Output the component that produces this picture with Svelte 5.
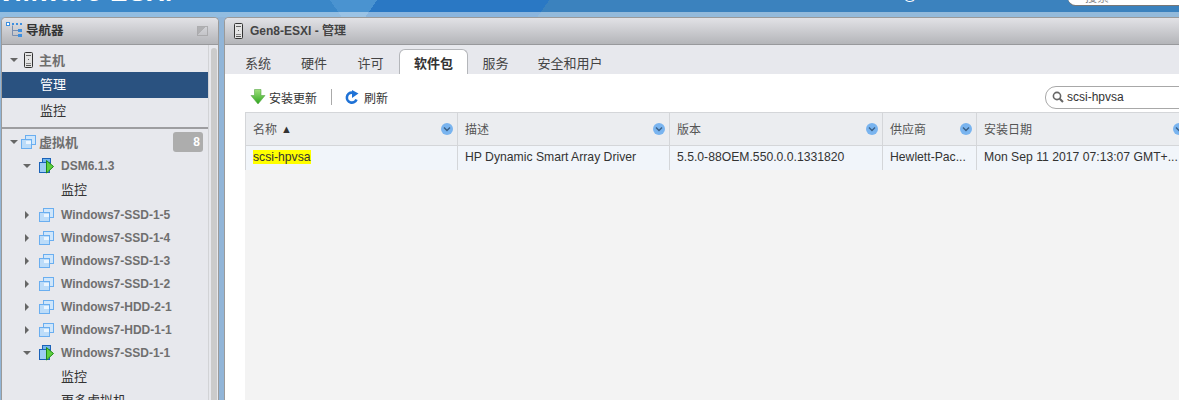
<script lang="ts">
	const vms = ['Windows7-SSD-1-5', 'Windows7-SSD-1-4', 'Windows7-SSD-1-3', 'Windows7-SSD-1-2', 'Windows7-HDD-2-1', 'Windows7-HDD-1-1'];
	const tabs = [
		{ label: '系统', w: 56 },
		{ label: '硬件', w: 56 },
		{ label: '许可', w: 57 },
		{ label: '软件包', w: 69, active: true },
		{ label: '服务', w: 55 },
		{ label: '安全和用户', w: 94 }
	];
	const columns = [
		{ label: '名称', sorted: true },
		{ label: '描述' },
		{ label: '版本' },
		{ label: '供应商' },
		{ label: '安装日期' }
	];
	const row = ['HP Dynamic Smart Array Driver', '5.5.0-88OEM.550.0.0.1331820', 'Hewlett-Pac...', 'Mon Sep 11 2017 07:13:07 GMT+...'];
</script>

{#snippet server()}
	<svg class="server" width="9" height="16" viewBox="0 0 9 16">
		<rect x="0.5" y="0.5" width="8" height="15" rx="1" fill="#e4e4e4" stroke="#333" />
		<rect x="2" y="3" width="5" height="1" fill="#666" />
		<rect x="4" y="7" width="1" height="1" fill="#666" />
		<rect x="2" y="11" width="5" height="1" fill="#888" />
		<rect x="2" y="13" width="5" height="1" fill="#555" />
	</svg>
{/snippet}

{#snippet vmIcon()}
	<svg width="15" height="14" viewBox="0 0 15 14">
		<rect x="4.5" y="0.5" width="10" height="9" fill="#cfe6fb" stroke="#6aaef0" />
		<rect x="0.5" y="4.5" width="10" height="9" fill="#bcdcf9" stroke="#6aaef0" />
		<rect x="5" y="6" width="5" height="3" fill="#eaf5ff" />
	</svg>
{/snippet}

{#snippet vmOn()}
	<svg width="15" height="16" viewBox="0 0 15 16">
		<rect x="3.5" y="0.5" width="8" height="8" fill="#6fb4ee" stroke="#1b62b8" />
		<rect x="0.5" y="4.5" width="10" height="10" fill="#9ccdf3" stroke="#1b62b8" />
		<path d="M7.5 2.5 L14.5 8.5 L7.5 15 Z" fill="#5fd13f" stroke="#1f8a14" />
	</svg>
{/snippet}

{#snippet caret(open: boolean)}
	<svg class="caret" width="8" height="8" viewBox="0 0 8 8">
		{#if open}
			<path d="M0 2 H8 L4 6 Z" fill="#666" />
		{:else}
			<path d="M2 0 L6 4 L2 8 Z" fill="#666" />
		{/if}
	</svg>
{/snippet}

{#snippet chevron()}
	<svg class="chev" width="12" height="12" viewBox="0 0 12 12">
		<circle cx="6" cy="6" r="6" fill="#79b4ef" />
		<path d="M3 4.5 L6 7.5 L9 4.5" fill="none" stroke="#3a5f86" stroke-width="1.4" />
	</svg>
{/snippet}

<div class="page">
	<header class="topbar">
		<div class="brand">vmware ESXi</div>
		<div class="user">root@192.168.1.8</div>
		<div class="help">帮助</div>
		<div class="topsearch">搜索</div>
	</header>

	<main class="main">
		<aside class="panel nav">
			<div class="title">
				<svg width="17" height="17" viewBox="0 0 17 17">
					<rect x="0.5" y="0.5" width="3" height="3" fill="#fff" stroke="#3d8fe0" />
					<rect x="6" y="1" width="2" height="2" fill="#3d8fe0" />
					<rect x="10" y="1" width="2" height="2" fill="#3d8fe0" />
					<rect x="14" y="1" width="2" height="2" fill="#3d8fe0" />
					<path d="M6.5 3.5 V13.5 H12 M6.5 8.5 H12" fill="none" stroke="#7a8fb0" />
					<rect x="12" y="7" width="4" height="3" fill="#3d8fe0" />
					<rect x="12" y="12" width="4" height="3" fill="#3d8fe0" />
				</svg>
				<span class="title-text">导航器</span>
				<span class="restore"></span>
			</div>
			<div class="nav-body">
				<div class="tree">
					<div class="host">
						<div class="item head">{@render caret(true)}{@render server()}<span>主机</span></div>
						<div class="item sub selected">管理</div>
						<div class="item sub">监控</div>
					</div>
					<div class="item head vmhead">
						{@render caret(true)}{@render vmIcon()}<span>虚拟机</span><span class="badge">8</span>
					</div>
					<div class="item vm">{@render caret(true)}{@render vmOn()}<span>DSM6.1.3</span></div>
					<div class="item leaf tall">监控</div>
					{#each vms as name}
						<div class="item vm">{@render caret(false)}{@render vmIcon()}<span>{name}</span></div>
					{/each}
					<div class="item vm">{@render caret(true)}{@render vmOn()}<span>Windows7-SSD-1-1</span></div>
					<div class="item leaf">监控</div>
					<div class="item leaf">更多虚拟机</div>
				</div>
				<div class="scroll"><div class="thumb"></div></div>
			</div>
		</aside>

		<section class="panel content">
			<div class="title">
				{@render server()}
				<span class="crumb">Gen8-ESXI - 管理</span>
			</div>
			<nav class="tabs">
				{#each tabs as t}
					<div class="tab" class:active={t.active} style="width: {t.w}px">{t.label}</div>
				{/each}
			</nav>
			<div class="body">
				<div class="toolbar">
					<svg width="16" height="16" viewBox="0 0 16 16">
						<defs>
							<linearGradient id="arrow" x1="0" y1="0" x2="0" y2="1">
								<stop offset="0" stop-color="#9ee07a" />
								<stop offset="1" stop-color="#2ea51e" />
							</linearGradient>
						</defs>
						<path d="M4.5 0.5 H11 V6.5 H15 L8 15 L1 6.5 H4.5 Z" fill="url(#arrow)" stroke="#5aa84a" stroke-width="0.6" />
					</svg>
					<span class="tool-label first">安装更新</span>
					<span class="sep"></span>
					<svg width="15" height="15" viewBox="0 0 15 15">
						<path d="M11.5 9.5 A5 5 0 1 1 7 2.6" fill="none" stroke="#1f72d6" stroke-width="2.6" />
						<path d="M7 0 L13.5 3.5 L7 8 Z" fill="#1f72d6" />
					</svg>
					<span class="tool-label">刷新</span>
					<div class="search">
						<svg width="12" height="12" viewBox="0 0 12 12">
							<circle cx="5" cy="5" r="3.6" fill="none" stroke="#666" stroke-width="1.6" />
							<path d="M7.7 7.7 L11 11" stroke="#666" stroke-width="2" />
						</svg>
						<span>scsi-hpvsa</span>
					</div>
				</div>
				<div class="grid-wrap">
					<div class="grid">
						{#each columns as c}
							<div class="th">
								<span class="th-label">{c.label}</span>
								{#if c.sorted}<span class="sort">▲</span>{/if}
								{@render chevron()}
							</div>
						{/each}
						<div class="td"><mark>scsi-hpvsa</mark></div>
						{#each row as cell}
							<div class="td">{cell}</div>
						{/each}
					</div>
				</div>
			</div>
		</section>
	</main>
</div>

<style>
	:global(body) {
		margin: 0;
		background: #91b5d8;
	}

	.page {
		width: 1179px;
		height: 400px;
		overflow: hidden;
		font-family: 'Liberation Sans', 'Noto Sans CJK SC', sans-serif;
		font-size: 12px;
		color: #333;
		background: #91b5d8;
	}

	.topbar {
		height: 17px;
		overflow: hidden;
		display: flex;
		background:
			linear-gradient(55deg, #3a87c8 280px, transparent 280px),
			linear-gradient(125deg, #4a93d0 309px, #2a78c4 309px, #2a78c4 450px, #3b82be 450px);
		box-shadow: inset 0 -5px 0 rgba(255, 255, 255, 0.45);
	}

	.brand {
		margin: -23px 0 0 -1px;
		width: 880px;
		flex: none;
		font-size: 26px;
		line-height: 30px;
		font-weight: bold;
		letter-spacing: 1px;
		color: #fff;
		height: 30px;
	}

	.user {
		margin-top: -13px;
		width: 126px;
		flex: none;
		height: 16px;
		font-size: 14px;
		line-height: 16px;
		color: #fff;
	}

	.help {
		margin-top: -13px;
		width: 63px;
		flex: none;
		height: 16px;
		font-size: 12px;
		line-height: 16px;
		color: #fff;
	}

	.topsearch {
		margin: -10px -60px 0 0;
		flex: 1;
		height: 15px;
		padding-left: 17px;
		border-radius: 8px;
		font-size: 12px;
		line-height: 17px;
		color: #888;
		background: #fff;
		box-shadow: 0 1px 0 #777;
	}

	.main {
		display: flex;
		gap: 5px;
		height: 383px;
		padding-left: 1px;
	}

	.panel {
		display: flex;
		flex-direction: column;
		box-sizing: border-box;
		border: 1px solid #9a9a9a;
		border-bottom: 0;
		border-radius: 5px 5px 0 0;
		overflow: hidden;
		background: #e7e8ed;
	}

	.nav {
		width: 218px;
		flex: none;
	}

	.content {
		flex: 1;
		min-width: 0;
		border-right: 0;
		border-radius: 5px 0 0 0;
	}

	.title {
		height: 27px;
		flex: none;
		box-sizing: border-box;
		display: flex;
		align-items: center;
		gap: 7px;
		padding: 0 0 1px 9px;
		background: linear-gradient(#e2e2e6, #b4b5b9);
		border-bottom: 1px solid #98999c;
	}

	.nav .title {
		padding-left: 4px;
		gap: 3px;
	}

	.title-text {
		padding-bottom: 2px;
		font-size: 12.5px;
		font-weight: bold;
		color: #333;
	}

	.restore {
		margin-left: auto;
		margin-right: 10px;
		width: 9px;
		height: 8px;
		border: 1px solid #a4a4a6;
		background: linear-gradient(135deg, #a9a9ab 45%, transparent 46%);
		opacity: 0.8;
	}

	.crumb {
		padding-bottom: 2px;
		font-size: 12px;
		color: #444;
		font-weight: bold;
	}

	.nav-body {
		flex: 1;
		display: flex;
		min-height: 0;
	}

	.tree {
		width: 206px;
		flex: none;
		border-right: 1px solid #d2d3d6;
	}

	.host {
		height: 82px;
		border-bottom: 2px solid #9d9da0;
	}

	.item {
		display: flex;
		align-items: center;
		box-sizing: border-box;
		height: 23px;
	}

	.caret {
		flex: none;
		margin-right: 4px;
	}

	.head {
		height: 27px;
		padding: 2px 0 0 8px;
		font-size: 13px;
		font-weight: bold;
		color: #6e6e6e;
	}

	.head span {
		margin-left: 6px;
	}

	.head :global(.server) {
		margin-left: 2px;
	}

	.sub {
		height: 26px;
		padding: 0 0 3px 38px;
		font-size: 13px;
		color: #333;
	}

	.selected {
		background: #2a5280;
		color: #fff;
	}

	.vmhead {
		height: 22px;
		margin: 2px 0;
		padding: 0 5px 0 8px;
	}

	.vmhead :global(.caret) {
		margin-right: 3px;
	}

	.vmhead span {
		margin-left: 3px;
		padding-bottom: 2px;
	}

	.vmhead .badge {
		margin-left: auto;
		width: 30px;
		height: 20px;
		box-sizing: border-box;
		padding: 0 3px 0 0;
		border-radius: 3px;
		background: #adadad;
		color: #fff;
		font-size: 12px;
		line-height: 20px;
		text-align: right;
	}

	.vm {
		padding: 0 0 1px 21px;
		font-weight: bold;
		color: #6f6f6f;
	}

	.vm :global(.caret) {
		margin-right: 8px;
	}

	.vm span {
		margin-left: 7px;
	}

	.leaf {
		height: 24px;
		padding: 0 0 3px 59px;
		font-size: 13px;
		color: #333;
	}

	.tall {
		height: 26px;
		padding-bottom: 5px;
	}

	.scroll {
		flex: 1;
		padding: 3px 1px 0 2px;
		background: #e7e8ed;
	}

	.thumb {
		height: 100%;
		background: #cbcbcb;
		border-radius: 3px 3px 0 0;
	}

	.tabs {
		height: 29px;
		flex: none;
		box-sizing: border-box;
		display: flex;
		align-items: flex-end;
		padding-left: 5px;
		background: #e7e8ed;
	}

	.tab {
		flex: none;
		height: 25px;
		box-sizing: border-box;
		display: flex;
		align-items: center;
		justify-content: center;
		padding-top: 1px;
		font-size: 13px;
		color: #444;
	}

	.tab.active {
		border: 1px solid #b4b6ba;
		border-bottom: 0;
		border-radius: 6px 6px 0 0;
		background: #fff;
		font-weight: bold;
		color: #333;
	}

	.body {
		flex: 1;
		min-height: 0;
		display: flex;
		flex-direction: column;
		background: #fff;
	}

	.toolbar {
		height: 38px;
		flex: none;
		box-sizing: border-box;
		display: flex;
		align-items: center;
		padding: 8px 0 0 25px;
	}

	.tool-label {
		margin-left: 4px;
		font-size: 12px;
		color: #333;
	}

	.tool-label.first {
		margin-left: 3px;
	}

	.sep {
		width: 1px;
		height: 16px;
		margin: 0 13px 0 14px;
		background: #aaa;
	}

	.search {
		margin-left: auto;
		margin-right: -20px;
		width: 154px;
		height: 23px;
		box-sizing: border-box;
		display: flex;
		align-items: center;
		gap: 3px;
		padding-left: 6px;
		border: 1px solid #a8a8a8;
		border-radius: 11px 0 0 11px;
		font-size: 12px;
		color: #333;
	}

	.grid-wrap {
		flex: 1;
		min-height: 0;
		margin: 0 -11px 0 20px;
		background: #f3f3f3;
	}

	.grid {
		display: grid;
		grid-template-columns: 212px 212px 213px 94px 1fr;
		border-top: 1px solid #d4d6d9;
		border-left: 1px solid #d4d6d9;
	}

	.th {
		height: 33px;
		box-sizing: border-box;
		display: flex;
		align-items: center;
		gap: 4px;
		padding: 0 4px 0 7px;
		background: #ebedf0;
		border-right: 1px solid #d4d6d9;
		border-bottom: 1px solid #d4d6d9;
		font-size: 12px;
		color: #555;
	}

	.th-label {
		padding-bottom: 2px;
	}

	.sort {
		font-size: 11px;
		color: #333;
	}

	.chev {
		margin-left: auto;
		flex: none;
	}

	.td {
		height: 24px;
		box-sizing: border-box;
		padding: 0 7px;
		background: #f1f5fa;
		border-right: 1px solid #d4d6d9;
		line-height: 23px;
		font-size: 12.2px;
		color: #333;
		white-space: nowrap;
		overflow: hidden;
	}

	mark {
		background: #ffff00;
		color: #333;
	}
</style>
